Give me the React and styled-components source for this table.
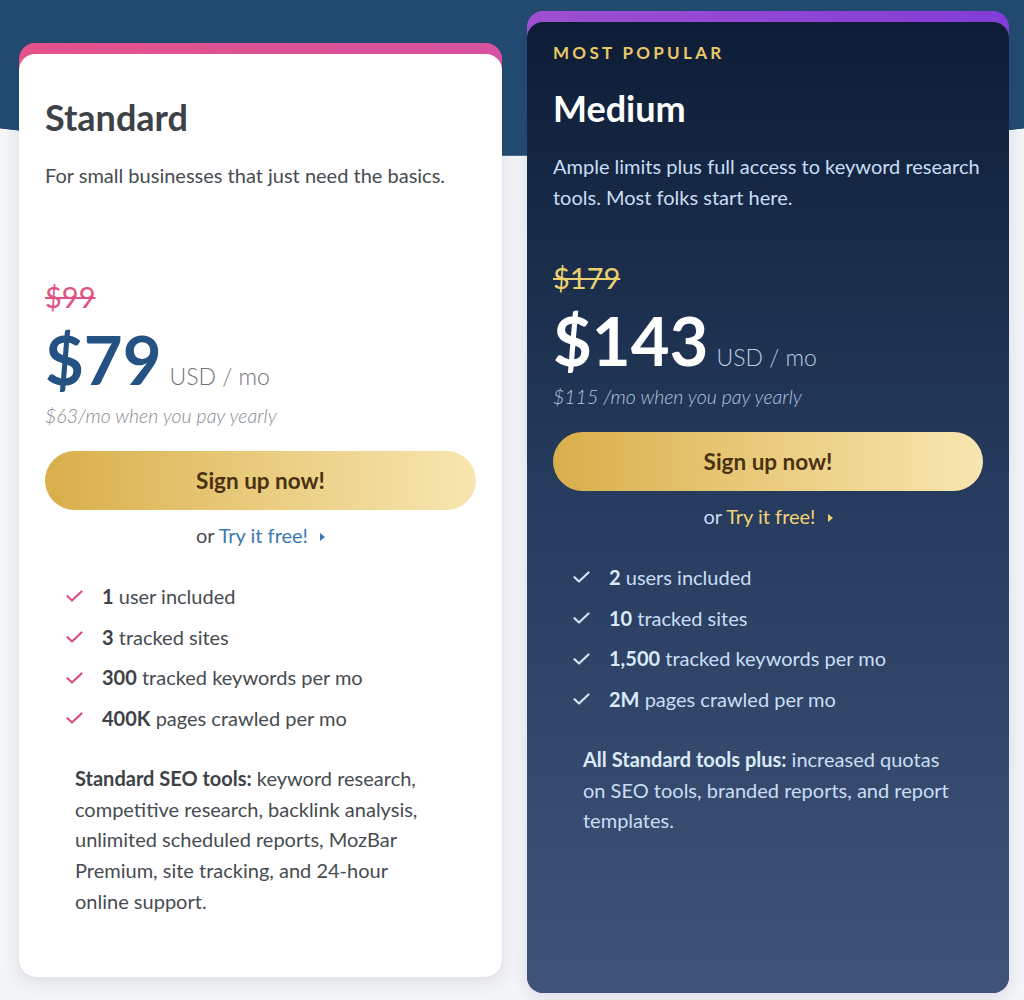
import React from "react";
import styled, { createGlobalStyle } from "styled-components";

const Global = createGlobalStyle`
  html, body { margin: 0; padding: 0; }
  body {
    font-family: Lato, "Open Sans", Arial, sans-serif;
    background: #f3f5f8;
    -webkit-font-smoothing: antialiased;
  }
  * { box-sizing: border-box; }
`;

const Page = styled.div`
  width: 1024px;
  height: 1000px;
  overflow: hidden;
  background: radial-gradient(ellipse 908px 156px at 50% 0, #234b71 99.6%, #f3f5f8 100%);
  display: flex;
  align-items: flex-start;
  gap: 25px;
  padding-left: 19px;
`;

const Card = styled.section`
  width: ${(p) => p.$w}px;
  height: ${(p) => p.$h}px;
  margin-top: ${(p) => p.$top}px;
  border-radius: 16px;
  padding-top: 11px;
  background: ${(p) => p.$accent};
  box-shadow: 0 4px 18px rgba(30, 45, 70, 0.12);
  display: flex;
  flex-direction: column;
`;

const Body = styled.div`
  flex: 1;
  border-radius: 16px;
  background: ${(p) => (p.$dark ? "linear-gradient(180deg, #0e1d36 0%, #24395b 45%, #405479 100%)" : "#ffffff")};
  padding: 0 26px;
  display: flex;
  flex-direction: column;
`;

const Header = styled.header`
  min-height: ${(p) => p.$h}px;
  padding-top: ${(p) => p.$pt}px;
`;

const Label = styled.div`
  font-size: 17px;
  line-height: 20px;
  font-weight: 700;
  letter-spacing: 3.3px;
  color: #e9c966;
  margin-bottom: 25px;
`;

const Title = styled.h2`
  margin: 0;
  font-size: 36px;
  line-height: 41px;
  font-weight: 700;
  color: ${(p) => (p.$dark ? "#ffffff" : "#3d4248")};
`;

const Desc = styled.p`
  margin: 22px 0 0;
  font-size: 20px;
  line-height: 31px;
  color: ${(p) => (p.$dark ? "#c9def5" : "#464b51")};
`;

const OldPrice = styled.div`
  font-size: 29px;
  line-height: 32px;
  color: ${(p) => (p.$dark ? "#ecd070" : "#e0527f")};
  text-decoration: line-through;
  text-decoration-thickness: 2px;
`;

const PriceRow = styled.div`
  margin-top: 13px;
  display: flex;
  align-items: baseline;
  gap: 8px;
`;

const Amount = styled.span`
  font-size: 67px;
  line-height: 66px;
  font-weight: 700;
  color: ${(p) => (p.$dark ? "#ffffff" : "#245282")};
`;

const Unit = styled.span`
  font-size: 23px;
  font-weight: 300;
  color: ${(p) => (p.$dark ? "#b9cde6" : "#6f7378")};
`;

const Yearly = styled.div`
  margin-top: 12px;
  font-size: 19.5px;
  line-height: 24px;
  font-style: italic;
  font-weight: 300;
  color: ${(p) => (p.$dark ? "#b3c7e0" : "#85898e")};
`;

const SignUp = styled.button`
  margin-top: 23px;
  width: 100%;
  height: 59px;
  border: 0;
  border-radius: 30px;
  background: linear-gradient(90deg, #d8ae49 0%, #e8c979 45%, #f7e6b0 100%);
  font-family: inherit;
  font-size: 22.5px;
  font-weight: 700;
  color: #4a3110;
  cursor: pointer;
`;

const TryLine = styled.div`
  margin-top: 13px;
  text-align: center;
  font-size: 20px;
  line-height: 24px;
  color: ${(p) => (p.$dark ? "#c9def5" : "#464b51")};
`;

const TryLink = styled.a`
  color: ${(p) => (p.$dark ? "#f0d270" : "#3a78b3")};
  text-decoration: none;
`;

const Caret = styled.span`
  display: inline-block;
  width: 0;
  height: 0;
  margin-left: 12px;
  vertical-align: 2px;
  border-top: 4px solid transparent;
  border-bottom: 4px solid transparent;
  border-left: 5px solid ${(p) => (p.$dark ? "#f0d270" : "#3a78b3")};
`;

const Features = styled.ul`
  list-style: none;
  margin: 29px 0 0;
  padding: 0 0 0 ${(p) => p.$indent}px;
`;

const Feature = styled.li`
  display: flex;
  align-items: center;
  gap: 19px;
  font-size: 20px;
  line-height: 40.7px;
  color: ${(p) => (p.$dark ? "#c9def5" : "#464b51")};

  b {
    font-weight: 700;
    color: ${(p) => (p.$dark ? "#dbe9f8" : "#3d4248")};
  }
`;

const Tools = styled.p`
  margin: 24px 0 0;
  padding: 0 31px 0 30px;
  font-size: 20px;
  line-height: 30.8px;
  color: ${(p) => (p.$dark ? "#c9def5" : "#464b51")};

  b {
    font-weight: 700;
    color: ${(p) => (p.$dark ? "#dbe9f8" : "#3d4248")};
  }
`;

const Check = ({ color }) => (
  <svg width="17" height="12" viewBox="0 0 17 12" fill="none">
    <path d="M1.5 6.2 L6 10.5 L15.5 1.5" stroke={color} strokeWidth="2.2" strokeLinecap="round" strokeLinejoin="round" />
  </svg>
);

const plans = [
  {
    key: "standard",
    dark: false,
    w: 483,
    h: 934,
    top: 43,
    accent: "linear-gradient(90deg, #e6528a 0%, #d653a0 100%)",
    headerH: 227,
    headerPt: 43,
    title: "Standard",
    desc: "For small businesses that just need the basics.",
    old: "$99",
    price: "$79",
    yearly: "$63/mo when you pay yearly",
    check: "#dc4f7d",
    indent: 21,
    features: [
      ["1", "user included"],
      ["3", "tracked sites"],
      ["300", "tracked keywords per mo"],
      ["400K", "pages crawled per mo"],
    ],
    toolsLead: "Standard SEO tools:",
    tools: " keyword research, competitive research, backlink analysis, unlimited scheduled reports, MozBar Premium, site tracking, and 24-hour online support.",
  },
  {
    key: "medium",
    dark: true,
    w: 482,
    h: 982,
    top: 11,
    accent: "linear-gradient(90deg, #9e4fd0 0%, #823cd8 100%)",
    headerH: 240,
    headerPt: 21,
    label: "MOST POPULAR",
    title: "Medium",
    desc: "Ample limits plus full access to keyword research tools. Most folks start here.",
    old: "$179",
    price: "$143",
    yearly: "$115 /mo when you pay yearly",
    check: "#d3e3f5",
    indent: 20,
    features: [
      ["2", "users included"],
      ["10", "tracked sites"],
      ["1,500", "tracked keywords per mo"],
      ["2M", "pages crawled per mo"],
    ],
    toolsLead: "All Standard tools plus:",
    tools: " increased quotas on SEO tools, branded reports, and report templates.",
  },
];

export default function App() {
  return (
    <>
      <Global />
      <Page>
        {plans.map((p) => (
          <Card key={p.key} $w={p.w} $h={p.h} $top={p.top} $accent={p.accent}>
            <Body $dark={p.dark}>
              <Header $h={p.headerH} $pt={p.headerPt}>
                {p.label && <Label>{p.label}</Label>}
                <Title $dark={p.dark}>{p.title}</Title>
                <Desc $dark={p.dark}>{p.desc}</Desc>
              </Header>
              <OldPrice $dark={p.dark}>{p.old}</OldPrice>
              <PriceRow>
                <Amount $dark={p.dark}>{p.price}</Amount>
                <Unit $dark={p.dark}>USD / mo</Unit>
              </PriceRow>
              <Yearly $dark={p.dark}>{p.yearly}</Yearly>
              <SignUp>Sign up now!</SignUp>
              <TryLine $dark={p.dark}>
                or <TryLink $dark={p.dark} href="#">Try it free!</TryLink>
                <Caret $dark={p.dark} />
              </TryLine>
              <Features $indent={p.indent}>
                {p.features.map(([n, t]) => (
                  <Feature key={t} $dark={p.dark}>
                    <Check color={p.check} />
                    <span>
                      <b>{n}</b> {t}
                    </span>
                  </Feature>
                ))}
              </Features>
              <Tools $dark={p.dark}>
                <b>{p.toolsLead}</b>
                {p.tools}
              </Tools>
            </Body>
          </Card>
        ))}
      </Page>
    </>
  );
}
